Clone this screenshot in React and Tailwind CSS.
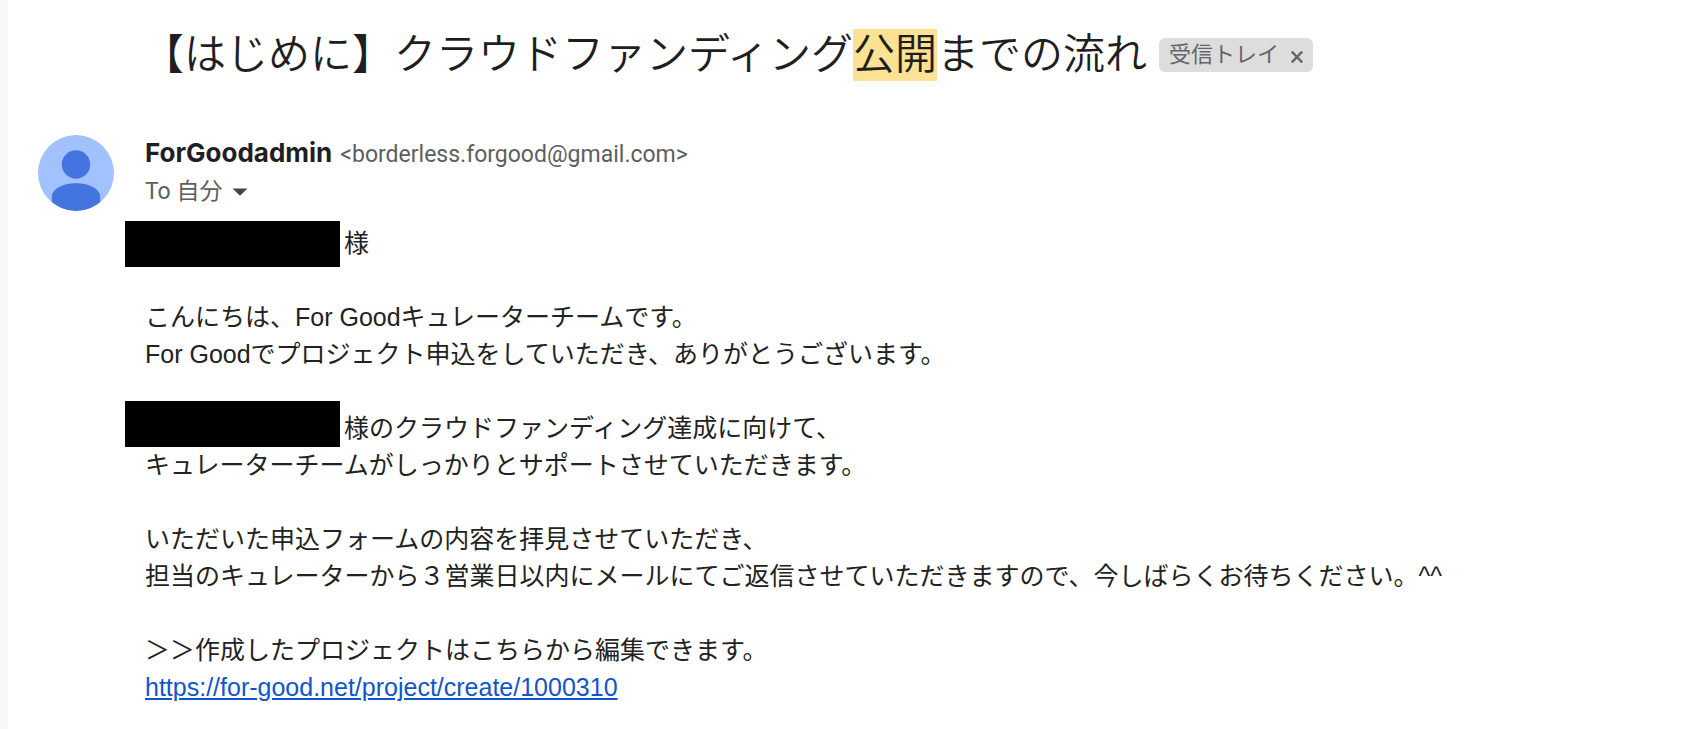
import React from "react";

const Avatar = () => (
  <svg viewBox="0 0 76 76" className="w-[76px] h-[76px] shrink-0" role="img" aria-label="ForGoodadmin">
    <defs>
      <clipPath id="avatar-clip">
        <circle cx="38" cy="38" r="38" />
      </clipPath>
    </defs>
    <g clipPath="url(#avatar-clip)">
      <rect width="76" height="76" fill="#a1c2ff" />
      <circle cx="38" cy="29.5" r="14.2" fill="#4374e0" />
      <path
        d="M13.8 76V62C13.8 54 25 48.3 38 48.3S62.2 54 62.2 62V76Z"
        fill="#4374e0"
      />
    </g>
  </svg>
);

// black bar over the recipient's name, it sticks out to the left of the text
const HiddenName = () => (
  <span className="w-[215px] h-[46px] shrink-0 -ml-5 mr-1 bg-black"></span>
);

const Subject = () => (
  <div className="flex items-center gap-3 pl-[134px] h-[110px]">
    <h1 className="text-[42px] leading-[44px] text-[#1f1f1f] font-['Noto_Sans_CJK_JP',sans-serif] font-[350] whitespace-nowrap">
      【はじめに】クラウドファンディング
      <mark className="inline-block pb-2 bg-[#fde293] text-[#1f1f1f]">公開</mark>
      までの流れ
    </h1>
    <div className="flex items-center gap-3 h-[34px] px-2.5 rounded-md bg-[#ddd] text-[#666]">
      <span className="text-[22px] leading-[34px] whitespace-nowrap">受信トレイ</span>
      <button aria-label="受信トレイを削除" className="flex pt-1">
        <svg viewBox="0 0 12 12" className="w-3 h-3" stroke="#666" strokeWidth="2.4">
          <path d="M0.8 0.5L11.2 11.5M11.2 0.5L0.8 11.5" />
        </svg>
      </button>
    </div>
  </div>
);

const Sender = () => (
  <div className="flex gap-[31px] pl-[30px] pt-[25px]">
    <Avatar />
    <div>
      <div className="flex items-baseline gap-2 leading-[36px]">
        <span className="text-[26px] font-bold text-[#1f1f1f] font-['Inter',sans-serif]">
          ForGoodadmin
        </span>
        <span className="text-[23px] text-[#5e5e5e]">
          &lt;borderless.forgood@gmail.com&gt;
        </span>
      </div>
      <button className="flex items-center gap-2.5 text-[23px] leading-[37px] text-[#5e5e5e]">
        To 自分
        <svg viewBox="0 0 16 8" className="w-4 h-2" fill="#444">
          <path d="M0.5 0.5H15.5L8 7.8Z" />
        </svg>
      </button>
    </div>
  </div>
);

const Body = () => (
  <div className="pl-[137px] pt-[14px] text-[25px] leading-[37px] text-[#222] font-['Liberation_Sans','Noto_Sans_CJK_JP',sans-serif]">
    <p className="flex items-center h-[37px] mb-[37px]">
      <HiddenName />様
    </p>
    <p className="mb-[37px]">
      こんにちは、For Goodキュレーターチームです。
      <br />
      For Goodでプロジェクト申込をしていただき、ありがとうございます。
    </p>
    <p className="flex items-end h-[37px]">
      <HiddenName />様のクラウドファンディング達成に向けて、
    </p>
    <p className="mb-[37px]">キュレーターチームがしっかりとサポートさせていただきます。</p>
    <p className="mb-[37px]">
      いただいた申込フォームの内容を拝見させていただき、
      <br />
      担当のキュレーターから３営業日以内にメールにてご返信させていただきますので、今しばらくお待ちください。^^
    </p>
    <p>
      ＞＞作成したプロジェクトはこちらから編集できます。
      <br />
      <a href="https://for-good.net/project/create/1000310" className="text-[#1155cc] underline">
        https://for-good.net/project/create/1000310
      </a>
    </p>
  </div>
);

const App = () => {
  return (
    <div className="min-h-screen bg-white border-l-8 border-[#f6f8fc] font-['Roboto','Noto_Sans_CJK_JP',sans-serif]">
      <Subject />
      <Sender />
      <Body />
    </div>
  );
};

export default App;
